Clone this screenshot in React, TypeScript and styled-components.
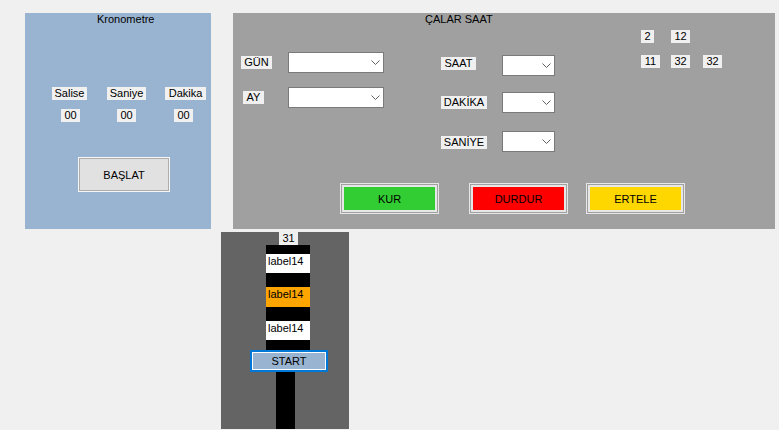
import React from "react";
import styled, { createGlobalStyle } from "styled-components";

const Global = createGlobalStyle`
  html, body { margin: 0; padding: 0; background: #f0f0f0; }
  body { font-family: "Liberation Sans", Arial, sans-serif; font-size: 11px; color: #000; }
  * { box-sizing: border-box; }
`;

const Page = styled.div`
  width: 779px;
  height: 430px;
  overflow: hidden;
  padding: 13px 0 0 25px;
  display: flex;
  flex-direction: column;
  align-items: flex-start;
`;

const TopRow = styled.div`
  display: flex;
  gap: 22px;
  align-items: flex-start;
`;

const ChronoPanel = styled.section`
  width: 186px;
  height: 216px;
  background: #99b4d1;
  display: flex;
  flex-direction: column;
  align-items: flex-start;
`;

const PanelTitle = styled.div<{ $left: number }>`
  padding-left: ${(p) => p.$left}px;
  line-height: 13px;
  height: 15px;
  white-space: nowrap;
`;

const Row = styled.div<{ $top: number; $left: number; $gap: number }>`
  display: flex;
  margin-top: ${(p) => p.$top}px;
  padding-left: ${(p) => p.$left}px;
  gap: ${(p) => p.$gap}px;
`;

const Label = styled.div<{ $w: number }>`
  width: ${(p) => p.$w}px;
  height: 13px;
  line-height: 13px;
  background: #f0f0f0;
  text-align: center;
  white-space: nowrap;
  flex: none;
`;

const StartChronoButton = styled.button`
  margin: 36px 0 0 54px;
  width: 90px;
  height: 33px;
  border: 1px solid #adadad;
  box-shadow: 0 0 0 1px #f6f6f6;
  background: #e1e1e1;
  font-family: "Liberation Sans", Arial, sans-serif;
  font-size: 11px;
  color: #000;
  padding: 0;
`;

const AlarmPanel = styled.section`
  width: 542px;
  height: 216px;
  background: #a0a0a0;
  display: flex;
  flex-direction: column;
`;

const AlarmBody = styled.div`
  height: 155px;
  display: flex;
  align-items: flex-start;
`;

const Column = styled.div<{ $left: number }>`
  display: flex;
  flex-direction: column;
  align-items: flex-start;
  margin-left: ${(p) => p.$left}px;
`;

const Spaced = styled.div<{ $top: number; $left?: number }>`
  margin-top: ${(p) => p.$top}px;
  margin-left: ${(p) => p.$left ?? 0}px;
`;

const Combo = styled.div<{ $w: number }>`
  width: ${(p) => p.$w}px;
  height: 21px;
  border: 1px solid #7a7a7a;
  background: #fff;
  display: flex;
  justify-content: flex-end;
  align-items: center;
  padding-right: 3px;
`;

const NumGrid = styled.div`
  display: grid;
  grid-template-columns: 30px 32px auto;
  row-gap: 12px;
  margin: 2px 0 0 86px;
  justify-items: start;
`;

const ButtonRow = styled.div`
  display: flex;
  padding-left: 107px;
`;

const ColorButton = styled.button<{ $bg: string; $ml: number }>`
  margin-left: ${(p) => p.$ml}px;
  width: 99px;
  height: 31px;
  border: 1px solid #e6e6e6;
  box-shadow: inset 0 0 0 1px #a0a0a0, inset 0 0 0 3px #e6e6e6;
  background: ${(p) => p.$bg};
  font-family: "Liberation Sans", Arial, sans-serif;
  font-size: 11px;
  color: #000;
  padding: 0;
`;

const LightPanel = styled.section`
  margin: 3px 0 0 196px;
  width: 128px;
  height: 197px;
  background: #646464;
  display: flex;
  flex-direction: column;
  align-items: flex-start;
`;

const Pole = styled.div`
  margin-left: 45px;
  width: 44px;
  height: 105px;
  background: #000;
  display: flex;
  flex-direction: column;
`;

const Lamp = styled.div<{ $bg: string; $top: number; $h: number }>`
  margin-top: ${(p) => p.$top}px;
  height: ${(p) => p.$h}px;
  background: ${(p) => p.$bg};
  line-height: 13px;
  padding: 1px 0 0 2px;
  white-space: nowrap;
`;

const StartButton = styled.button`
  margin-left: 29px;
  width: 78px;
  height: 22px;
  border: 2px solid #0078d7;
  box-shadow: inset 0 0 0 1px #fff;
  background: #99b4d1;
  font-family: "Liberation Sans", Arial, sans-serif;
  font-size: 11px;
  color: #000;
  padding: 0;
`;

const Stem = styled.div`
  margin-left: 55px;
  width: 19px;
  flex: 1;
  background: #000;
`;

const Chevron = () => (
  <svg width="9" height="5" viewBox="0 0 9 5">
    <polyline points="0.5,0.5 4.5,4.5 8.5,0.5" fill="none" stroke="#606060" strokeWidth="1" />
  </svg>
);

export default function App() {
  return (
    <>
      <Global />
      <Page>
        <TopRow>
          <ChronoPanel>
            <PanelTitle $left={72}>Kronometre</PanelTitle>
            <Row $top={59} $left={27} $gap={20}>
              <Label $w={35}>Salise</Label>
              <Label $w={39}>Saniye</Label>
              <Label $w={41} style={{ marginLeft: -1 }}>Dakika</Label>
            </Row>
            <Row $top={9} $left={36} $gap={37}>
              <Label $w={19}>00</Label>
              <Label $w={19}>00</Label>
              <Label $w={19} style={{ marginLeft: 1 }}>00</Label>
            </Row>
            <StartChronoButton>BAŞLAT</StartChronoButton>
          </ChronoPanel>

          <AlarmPanel>
            <PanelTitle $left={192}>ÇALAR SAAT</PanelTitle>
            <AlarmBody>
              <Column $left={8}>
                <Spaced $top={28}>
                  <Label $w={31}>GÜN</Label>
                </Spaced>
                <Spaced $top={22} $left={2}>
                  <Label $w={21}>AY</Label>
                </Spaced>
              </Column>
              <Column $left={16}>
                <Spaced $top={24}>
                  <Combo $w={96}><Chevron /></Combo>
                </Spaced>
                <Spaced $top={14}>
                  <Combo $w={96}><Chevron /></Combo>
                </Spaced>
              </Column>
              <Column $left={57}>
                <Spaced $top={29}>
                  <Label $w={35}>SAAT</Label>
                </Spaced>
                <Spaced $top={26}>
                  <Label $w={46}>DAKİKA</Label>
                </Spaced>
                <Spaced $top={27}>
                  <Label $w={46}>SANİYE</Label>
                </Spaced>
              </Column>
              <Column $left={15}>
                <Spaced $top={27}>
                  <Combo $w={53}><Chevron /></Combo>
                </Spaced>
                <Spaced $top={16}>
                  <Combo $w={53}><Chevron /></Combo>
                </Spaced>
                <Spaced $top={18}>
                  <Combo $w={53}><Chevron /></Combo>
                </Spaced>
              </Column>
              <NumGrid>
                <Label $w={13}>2</Label>
                <Label $w={19}>12</Label>
                <span />
                <Label $w={19}>11</Label>
                <Label $w={19}>32</Label>
                <Label $w={19}>32</Label>
              </NumGrid>
            </AlarmBody>
            <ButtonRow>
              <ColorButton $bg="#32cd32" $ml={0}>KUR</ColorButton>
              <ColorButton $bg="#ff0000" $ml={30}>DURDUR</ColorButton>
              <ColorButton $bg="#ffd700" $ml={18}>ERTELE</ColorButton>
            </ButtonRow>
          </AlarmPanel>
        </TopRow>

        <LightPanel>
          <Spaced $top={0} $left={58}>
            <Label $w={19}>31</Label>
          </Spaced>
          <Pole>
            <Lamp $bg="#ffffff" $top={9} $h={19}>label14</Lamp>
            <Lamp $bg="#ffa500" $top={14} $h={20}>label14</Lamp>
            <Lamp $bg="#ffffff" $top={14} $h={19}>label14</Lamp>
          </Pole>
          <StartButton>START</StartButton>
          <Stem />
        </LightPanel>
      </Page>
    </>
  );
}
